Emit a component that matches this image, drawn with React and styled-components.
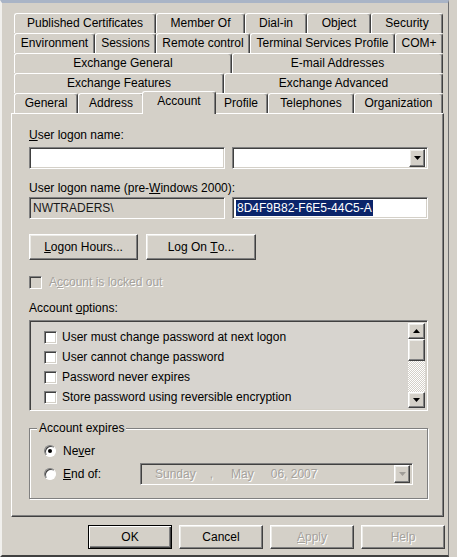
import React from "react";
import styled, { createGlobalStyle, css } from "styled-components";

const GlobalStyle = createGlobalStyle`
  html, body {
    margin: 0;
    padding: 0;
    background: #d4d0c8;
  }
  body {
    font-family: "Liberation Sans", Arial, sans-serif;
    font-size: 12px;
    color: #000;
  }
`;

const raised = css`
  border: 1px solid;
  border-color: #fff #404040 #404040 #fff;
  box-shadow: inset -1px -1px 0 #808080, inset 1px 1px 0 #ecebe7;
`;

const sunken = css`
  border: 1px solid;
  border-color: #808080 #fff #fff #808080;
  box-shadow: inset 1px 1px 0 #404040, inset -1px -1px 0 #d4d0c8;
`;

const disabledText = css`
  color: #a5a29d;
  text-shadow: 1px 1px 0 #fff;
`;

const Window = styled.div`
  box-sizing: border-box;
  width: 449px;
  height: 557px;
  background: #d4d0c8;
  border-top: 3px solid #a9b4c6;
  border-left: 2px solid #f1f0ed;
  border-right: 1px solid #707070;
  border-bottom: 2px solid #404040;
  padding: 10px 3px 0 9px;
  display: flex;
  flex-direction: column;
`;

const TabRows = styled.div`
  display: flex;
  flex-direction: column;
  margin-left: 3px;
  width: 429px;
`;

const TabRow = styled.div`
  display: flex;
  height: 20px;
`;

const Tab = styled.div`
  box-sizing: border-box;
  width: ${(p) => p.$w}px;
  height: 20px;
  flex-shrink: 0;
  border-top: 1px solid #fff;
  border-left: 1px solid #fff;
  border-right: 1px solid #404040;
  box-shadow: inset -1px 0 0 #808080;
  border-radius: 3px 3px 0 0;
  background: #d4d0c8;
  display: flex;
  align-items: center;
  justify-content: center;
  white-space: nowrap;
  padding-bottom: 1px;
  ${(p) =>
    p.$active &&
    css`
      position: relative;
      z-index: 2;
      width: ${p.$w + 4}px;
      height: 23px;
      margin: -2px -2px 0;
      padding-bottom: 4px;
    `}
`;

const Panel = styled.div`
  box-sizing: border-box;
  width: 433px;
  height: 404px;
  border: 1px solid;
  border-color: #fff #404040 #404040 #fff;
  box-shadow: inset -1px -1px 0 #808080;
  padding-left: 17px;
  display: flex;
  flex-direction: column;
`;

const Label = styled.div`
  line-height: 14px;
  height: 14px;
  margin-top: ${(p) => p.$mt}px;
  white-space: nowrap;
`;

const U = styled.span`
  text-decoration: underline;
  text-underline-offset: 1px;
`;

const Row = styled.div`
  display: flex;
  align-items: center;
  gap: ${(p) => p.$gap ?? 7}px;
  margin-top: ${(p) => p.$mt}px;
`;

const TextBox = styled.div`
  box-sizing: border-box;
  width: ${(p) => p.$w ?? 196}px;
  height: 22px;
  ${sunken};
  background: ${(p) => (p.$readOnly ? "#d4d0c8" : "#fff")};
  display: flex;
  align-items: center;
  padding: 0 2px 0 3px;
  white-space: nowrap;
  color: #1a1a1a;
`;

const Selected = styled.span`
  background: #0a246a;
  color: #fff;
  line-height: 16px;
  padding: 0 1px;
`;

const Combo = styled(TextBox)`
  justify-content: flex-end;
  padding: 2px;
`;

const DropButton = styled.div`
  box-sizing: border-box;
  width: 16px;
  height: 18px;
  ${raised};
  background: #d4d0c8;
  display: flex;
  align-items: center;
  justify-content: center;
`;

const Arrow = ({ up, color = "#000" }) => (
  <svg width="7" height="4" viewBox="0 0 7 4">
    <polygon
      points={up ? "0,4 7,4 3.5,0" : "0,0 7,0 3.5,4"}
      fill={color}
    />
  </svg>
);

const Button = styled.div`
  box-sizing: border-box;
  width: ${(p) => p.$w}px;
  height: ${(p) => p.$h ?? 24}px;
  background: #d4d0c8;
  ${raised};
  display: flex;
  align-items: center;
  justify-content: center;
  white-space: pre;
  ${(p) => p.$disabled && disabledText};
  ${(p) =>
    p.$default &&
    css`
      border: 1px solid #000;
      box-shadow: inset 1px 1px 0 #fff, inset -1px -1px 0 #404040,
        inset -2px -2px 0 #808080;
    `}
`;

const CheckBox = styled.div`
  box-sizing: border-box;
  width: 13px;
  height: 13px;
  flex-shrink: 0;
  ${sunken};
  background: ${(p) => (p.$disabled ? "#d4d0c8" : "#fff")};
`;

const CheckLine = styled.div`
  display: flex;
  align-items: center;
  gap: ${(p) => p.$gap ?? 5}px;
  height: ${(p) => p.$h ?? 14}px;
  margin-top: ${(p) => p.$mt ?? 0}px;
  white-space: nowrap;
  ${(p) => p.$disabled && disabledText};
`;

const ListBox = styled.div`
  box-sizing: border-box;
  width: 399px;
  height: 91px;
  margin-top: 5px;
  ${sunken};
  background: #d7d4cf;
  display: flex;
  padding: 2px;
`;

const ListItems = styled.div`
  flex: 1;
  padding: 4px 0 0 12px;
  display: flex;
  flex-direction: column;
`;

const ScrollBar = styled.div`
  width: 17px;
  display: flex;
  flex-direction: column;
`;

const ScrollButton = styled.div`
  box-sizing: border-box;
  height: ${(p) => p.$h}px;
  ${raised};
  background: #d4d0c8;
  display: flex;
  align-items: center;
  justify-content: center;
`;

const ScrollTrack = styled.div`
  flex: 1;
  background: repeating-conic-gradient(#fff 0 25%, #d4d0c8 0 50%) 0 0 / 2px
    2px;
`;

const GroupBox = styled.div`
  box-sizing: border-box;
  position: relative;
  width: 399px;
  height: 71px;
  margin-top: 17px;
  border: 1px solid #808080;
  box-shadow: inset 1px 1px 0 #fff, 1px 1px 0 #fff;
  padding: 14px 0 0 14px;
  display: flex;
  flex-direction: column;
  gap: 4px;
`;

const Legend = styled.div`
  position: absolute;
  top: -8px;
  left: 7px;
  padding: 0 2px;
  background: #d4d0c8;
  line-height: 14px;
`;

const RadioLine = styled.div`
  display: flex;
  align-items: center;
  height: ${(p) => p.$h}px;
`;

const RadioOption = styled.div`
  display: flex;
  align-items: center;
  gap: 7px;
  width: ${(p) => p.$w ?? "auto"};
  flex-shrink: 0;
`;

const Radio = styled.div`
  box-sizing: border-box;
  width: 12px;
  height: 12px;
  border-radius: 50%;
  border: 1px solid;
  border-color: #808080 #fff #fff #808080;
  box-shadow: inset 1px 1px 0 #404040;
  background: #fff;
  display: flex;
  align-items: center;
  justify-content: center;
  &::after {
    content: "";
    width: 4px;
    height: 4px;
    border-radius: 50%;
    background: ${(p) => (p.$checked ? "#000" : "transparent")};
  }
`;

const DateBox = styled.div`
  box-sizing: border-box;
  width: 273px;
  height: 22px;
  ${sunken};
  background: #d4d0c8;
  display: flex;
  align-items: center;
  padding: 2px 2px 2px 0;
  ${disabledText};
`;

const DatePart = styled.span`
  margin-left: ${(p) => p.$ml}px;
  white-space: nowrap;
`;

const DateDrop = styled(DropButton)`
  margin-left: auto;
`;

const Buttons = styled.div`
  display: flex;
  justify-content: flex-end;
  gap: 7px;
  margin-top: 8px;
  width: 434px;
`;

const tabRows = [
  [
    ["Published Certificates", 142],
    ["Member Of", 89],
    ["Dial-in", 62],
    ["Object", 64],
    ["Security", 72],
  ],
  [
    ["Environment", 81],
    ["Sessions", 61],
    ["Remote control", 94],
    ["Terminal Services Profile", 145],
    ["COM+", 48],
  ],
  [
    ["Exchange General", 218],
    ["E-mail Addresses", 211],
  ],
  [
    ["Exchange Features", 210],
    ["Exchange Advanced", 219],
  ],
  [
    ["General", 64],
    ["Address", 66],
    ["Account", 70, true],
    ["Profile", 54],
    ["Telephones", 86],
    ["Organization", 89],
  ],
];

const options = [
  "User must change password at next logon",
  "User cannot change password",
  "Password never expires",
  "Store password using reversible encryption",
];

export default function App() {
  return (
    <>
      <GlobalStyle />
      <Window>
        <TabRows>
          {tabRows.map((row, i) => (
            <TabRow key={i}>
              {row.map(([name, w, active]) => (
                <Tab key={name} $w={w} $active={active}>
                  {name}
                </Tab>
              ))}
            </TabRow>
          ))}
        </TabRows>

        <Panel>
          <Label $mt={14}>
            <U>U</U>ser logon name:
          </Label>
          <Row $mt={5}>
            <TextBox />
            <Combo>
              <DropButton>
                <Arrow />
              </DropButton>
            </Combo>
          </Row>

          <Label $mt={12}>
            User logon name (pre-<U>W</U>indows 2000):
          </Label>
          <Row $mt={2}>
            <TextBox $readOnly>NWTRADERS\</TextBox>
            <TextBox>
              <Selected>8D4F9B82-F6E5-44C5-A</Selected>
            </TextBox>
          </Row>

          <Row $mt={15} $gap={8}>
            <Button $w={109} $h={26}>
              <U>L</U>ogon Hours...
            </Button>
            <Button $w={110} $h={26}>
              {"Log On "}
              <U>T</U>o...
            </Button>
          </Row>

          <CheckLine $mt={15} $gap={7} $disabled>
            <CheckBox $disabled />
            <span>
              A<U>c</U>count is locked out
            </span>
          </CheckLine>

          <Label $mt={12}>
            Account <U>o</U>ptions:
          </Label>
          <ListBox>
            <ListItems>
              {options.map((o) => (
                <CheckLine key={o} $h={20} $gap={5}>
                  <CheckBox />
                  <span>{o}</span>
                </CheckLine>
              ))}
            </ListItems>
            <ScrollBar>
              <ScrollButton $h={16}>
                <Arrow up />
              </ScrollButton>
              <ScrollButton $h={22} />
              <ScrollTrack />
              <ScrollButton $h={16}>
                <Arrow />
              </ScrollButton>
            </ScrollBar>
          </ListBox>

          <GroupBox>
            <Legend>Account expires</Legend>
            <RadioLine $h={16}>
              <RadioOption>
                <Radio $checked />
                <span>
                  Ne<U>v</U>er
                </span>
              </RadioOption>
            </RadioLine>
            <RadioLine $h={22}>
              <RadioOption $w="96px">
                <Radio />
                <span>
                  <U>E</U>nd of:
                </span>
              </RadioOption>
              <DateBox>
                <DatePart $ml={14}>Sunday</DatePart>
                <DatePart $ml={14}>,</DatePart>
                <DatePart $ml={18}>May</DatePart>
                <DatePart $ml={17}>06, 2007</DatePart>
                <DateDrop>
                  <Arrow color="#a09d98" />
                </DateDrop>
              </DateBox>
            </RadioLine>
          </GroupBox>
        </Panel>

        <Buttons>
          <Button $w={84} $default>
            OK
          </Button>
          <Button $w={84}>Cancel</Button>
          <Button $w={84} $disabled>
            <U>A</U>pply
          </Button>
          <Button $w={84} $disabled>
            Help
          </Button>
        </Buttons>
      </Window>
    </>
  );
}
